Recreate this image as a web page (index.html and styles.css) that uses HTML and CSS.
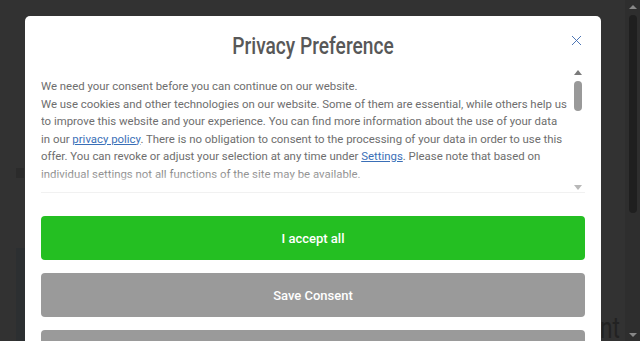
FILE: index.html
```html
<!DOCTYPE html>
<html>
<head>
<meta charset="utf-8">
<link rel="stylesheet" href="styles.css">
</head>
<body>
<div class="page">
  <div class="stage">
    <div class="bg-left"></div>
    <div class="bg-left-block"></div>
    <div class="bg-word">nt</div>
    <div class="modal">
      <div class="head">
        <span></span>
        <h1 class="title"><span class="squeeze">Privacy Preference</span></h1>
        <button class="close" aria-label="close">
          <svg width="11" height="11" viewBox="0 0 11 11"><path d="M1 1 L10 10 M10 1 L1 10" stroke="#3b68ad" stroke-width="0.9" fill="none"/></svg>
        </button>
      </div>
      <div class="textbox">
        <div class="textcol">
          <p>We need your consent before you can continue on our website.<br>We use cookies and other technologies on our website. Some of them are essential, while others help us to improve this website and your experience. You can find more information about the use of your data in our <a href="#">privacy policy</a>. There is no obligation to consent to the processing of your data in order to use this offer. You can revoke or adjust your selection at any time under <a href="#">Settings</a>. Please note that based on individual settings not all functions of the site may be available.</p>
          <p>Some services process personal data in the USA. With your consent to use these services, you also consent to the processing of your data in the USA.</p>
          <div class="fade"></div>
        </div>
        <div class="sbar">
          <span class="arr up"></span>
          <span class="thumb"></span>
          <span class="grow"></span>
          <span class="arr down"></span>
        </div>
      </div>
      <div class="buttons">
        <button class="btn green">I accept all</button>
        <button class="btn gray">Save Consent</button>
        <button class="btn gray">Individual Privacy Preferences</button>
      </div>
    </div>
  </div>
  <div class="pagebar">
    <span class="parr pup"></span>
    <span class="pthumb"></span>
    <span class="pgrow"></span>
    <span class="parr pdown"></span>
  </div>
</div>
</body>
</html>
```
FILE: styles.css
```css
html, body {
  margin: 0;
  padding: 0;
  height: 341px;
  overflow: hidden;
  background: #323232;
}
.page {
  display: flex;
  height: 341px;
}
.stage {
  flex: 1;
  position: relative;
  overflow: hidden;
}
.bg-left {
  position: absolute;
  left: 16px;
  top: 248px;
  width: 10px;
  height: 100px;
  background: #2c2f31;
}
.bg-left-block {
  position: absolute;
  left: 16px;
  top: 168px;
  width: 8px;
  height: 10px;
  background: #2b2b2b;
}
.bg-word {
  position: absolute;
  left: 600px;
  top: 311px;
  font-family: "Roboto", sans-serif;
  font-size: 29px;
  line-height: 34px;
  color: #222;
  transform: scaleX(0.78);
  transform-origin: left top;
}
.modal {
  position: absolute;
  left: 25px;
  top: 16px;
  width: 544px;
  height: 360px;
  padding: 16px;
  background: #fff;
  border-radius: 5px;
  box-sizing: content-box;
}
.head {
  display: grid;
  grid-template-columns: 1fr auto 1fr;
  align-items: center;
  height: 28px;
  margin-bottom: 6px;
}
.title {
  margin: 0;
  width: 161px;
  display: flex;
  justify-content: center;
  font-family: "Roboto", "Liberation Sans", sans-serif;
  font-weight: 500;
  font-size: 23.5px;
  line-height: 28px;
  color: #585858;
  white-space: nowrap;
}
.squeeze {
  display: inline-block;
  transform: scaleX(0.815);
}
.close {
  justify-self: end;
  align-self: start;
  margin: 3px 3px 0 0;
  padding: 0;
  border: 0;
  background: none;
  width: 11px;
  height: 11px;
  display: flex;
  align-items: center;
  justify-content: center;
}
.textbox {
  display: flex;
  height: 126px;
  border-bottom: 1px solid #f1f1f1;
}
.textcol {
  position: relative;
  width: 527px;
  flex: none;
  overflow: hidden;
  padding-top: 12px;
  box-sizing: border-box;
  font-family: "Roboto", "Liberation Sans", sans-serif;
  font-size: 11.4px;
  line-height: 17.5px;
  color: #6e6e6e;
}
.textcol p {
  margin: 0 0 6px 0;
}
.textcol a {
  color: #3a6fb7;
  text-decoration: underline;
}
.fade {
  position: absolute;
  left: 0;
  right: 0;
  bottom: 0;
  height: 22px;
  background: linear-gradient(to bottom, rgba(255,255,255,0.1), rgba(255,255,255,0.35) 30%, rgba(255,255,255,0.95) 65%, #fff);
}
.sbar {
  flex: 1;
  display: flex;
  flex-direction: column;
  align-items: center;
  padding: 4px 0 2px 2px;
}
.arr {
  width: 0;
  height: 0;
  border-left: 4px solid transparent;
  border-right: 4px solid transparent;
}
.arr.up {
  border-bottom: 5px solid #7a7a7a;
}
.arr.down {
  border-top: 5px solid #b8b8b8;
}
.thumb {
  width: 8px;
  height: 30px;
  margin-top: 6px;
  border-radius: 4px;
  background: #999;
}
.grow { flex: 1; }
.buttons {
  display: flex;
  flex-direction: column;
  gap: 13px;
  margin-top: 23px;
}
.btn {
  display: block;
  width: 100%;
  height: 44px;
  border: 0;
  border-radius: 4px;
  color: #fff;
  font-family: "Roboto", "Liberation Sans", sans-serif;
  font-size: 13px;
  font-weight: 500;
  text-align: center;
}
.btn.green { background: #24bf22; }
.btn.gray { background: #9a9a9a; }
.pagebar {
  width: 15px;
  display: flex;
  flex-direction: column;
  align-items: center;
  background: #2e2e2e;
  padding: 5px 0 4px 0;
  box-sizing: border-box;
}
.parr {
  width: 0;
  height: 0;
  border-left: 4px solid transparent;
  border-right: 4px solid transparent;
}
.pup { border-bottom: 4px solid #888; }
.pdown { border-top: 4px solid #888; }
.pthumb {
  width: 8px;
  height: 198px;
  margin-top: 6px;
  border-radius: 4px;
  background: #1f1f1f;
}
.pgrow { flex: 1; }
```
